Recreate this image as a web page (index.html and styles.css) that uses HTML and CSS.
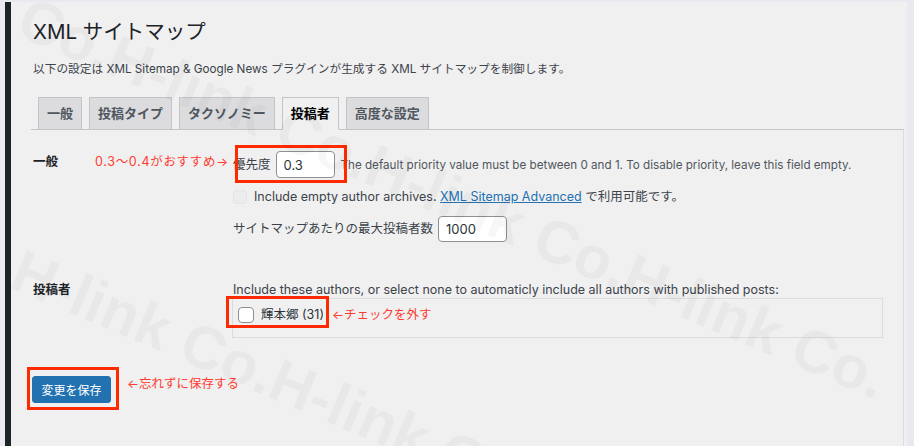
FILE: index.html
```html
<!DOCTYPE html>
<html lang="ja">
<head>
    <meta charset="UTF-8">
    <meta name="viewport" content="width=device-width, initial-scale=1.0">
    <title>XML サイトマップ</title>
    <link rel="stylesheet" href="styles.css">
</head>
<body>

    <div class="screen">
        <div class="wrap">
            <h1>XML サイトマップ</h1>
            <p class="intro">以下の設定は XML Sitemap &amp; Google News プラグインが生成する XML サイトマップを制御します。</p>

            <nav class="tabs">
                <a class="tab">一般</a>
                <a class="tab">投稿タイプ</a>
                <a class="tab">タクソノミー</a>
                <a class="tab tab-active">投稿者</a>
                <a class="tab">高度な設定</a>
            </nav>

            <form class="panel">
                <!-- 一般 -->
                <div class="row row-first">
                    <div class="row-label">
                        <span class="label-text">一般</span>
                        <span class="note note-priority">0.3〜0.4がおすすめ→</span>
                    </div>
                    <div class="row-field">
                        <div class="line">
                            <span class="marked">
                                <label for="priority">優先度</label>
                                <input type="text" id="priority" class="small-input" value="0.3">
                                <span class="redbox box-priority"></span>
                            </span>
                            <span class="description">The default priority value must be between 0 and 1. To disable priority, leave this field empty.</span>
                        </div>
                        <div class="line line-check">
                            <input type="checkbox" class="check check-disabled" disabled>
                            <span>Include empty author archives. <a class="link">XML Sitemap Advanced</a> で利用可能です。</span>
                        </div>
                        <div class="line line-max">
                            <label for="max-authors">サイトマップあたりの最大投稿者数</label>
                            <input type="text" id="max-authors" class="num-input" value="1000">
                        </div>
                    </div>
                </div>

                <!-- 投稿者 -->
                <div class="row">
                    <div class="row-label">
                        <span class="label-text">投稿者</span>
                    </div>
                    <div class="row-field">
                        <p class="authors-help">Include these authors, or select none to automaticly include all authors with published posts:</p>
                        <div class="author-box">
                            <span class="marked author">
                                <input type="checkbox" class="check">
                                <span>輝本郷 (31)</span>
                                <span class="redbox box-author"></span>
                            </span>
                            <span class="note">←チェックを外す</span>
                        </div>
                    </div>
                </div>

                <div class="submit">
                    <span class="marked">
                        <button type="button" class="button-primary">変更を保存</button>
                        <span class="redbox box-save"></span>
                    </span>
                    <span class="note note-save">←忘れずに保存する</span>
                </div>
            </form>
        </div>

        <span class="watermark wm-one">H-link Co.H-link Co.H-link Co.</span>
        <span class="watermark wm-two">H-link Co.H-link Co.H-link Co.H-link Co.</span>
    </div>

</body>
</html>
```

FILE: styles.css
```css
body {
    margin: 0;
    height: 100vh;
    box-sizing: border-box;
    padding: 2px 7px 0 5px;
    background-color: #e9e9ef;
    display: flex;
    overflow: hidden;
    font-family: Inter, "Noto Sans CJK JP", sans-serif;
    font-size: 12.5px;
    color: #3c434a;
}

.screen {
    flex: 1;
    position: relative;
    overflow: hidden;
    border-left: 6px solid #1d2327;
    background-color: #f0f0f1;
    padding: 0 3px 0 20px;
}

.wrap {
    height: 100%;
    display: flex;
    flex-direction: column;
}

h1 {
    margin: 16px 0 0;
    padding-left: 2px;
    font-size: 20.5px;
    font-weight: 400;
    line-height: 27px;
    color: #1d2327;
}

.intro {
    margin: 15px 0 0;
    padding-left: 2px;
    font-size: 11.7px;
    line-height: 18px;
    color: #3c434a;
}

/* tabs */
.tabs {
    display: flex;
    align-items: flex-end;
    gap: 7px;
    margin-top: 19px;
    padding-left: 7px;
    border-bottom: 1px solid #c3c4c7;
}

.tab {
    border: 1px solid #c3c4c7;
    border-bottom: none;
    background-color: #dcdcde;
    color: #50575e;
    font-size: 13px;
    font-weight: 700;
    line-height: 20px;
    padding: 5px 8px 6px;
}

.tab-active {
    background-color: #f0f0f1;
    border-bottom: 1px solid #f0f0f1;
    margin-bottom: -1px;
    color: #000;
}

/* form */
.panel {
    flex: 1;
    border-right: 1px solid #dcdcde;
}

.row {
    display: grid;
    grid-template-columns: 202px 1fr;
    padding: 20px 0;
}

.row-first {
    padding-top: 21px;
}

.row-label {
    display: flex;
    align-items: center;
    padding-left: 2px;
    line-height: 16px;
    align-self: start;
}

.row-first .row-label {
    padding-top: 3px;
}

.label-text {
    width: 62px;
    font-weight: 700;
    color: #1d2327;
}

.note {
    color: #ff3b30;
    white-space: nowrap;
}

.note-priority {
    letter-spacing: 0.7px;
}

.line {
    display: flex;
    align-items: center;
    line-height: 20px;
}

.line-check,
.line-max {
    margin-top: 9px;
}

.line-max label {
    margin-right: 5px;
}

.marked {
    position: relative;
    display: inline-flex;
    align-items: center;
}

.marked label {
    margin-right: 5px;
}

.small-input,
.num-input {
    box-sizing: border-box;
    height: 27px;
    padding: 0 7px;
    border: 1px solid #8c8f94;
    border-radius: 4px;
    background-color: white;
    font-family: Inter, sans-serif;
    font-size: 13px;
    color: #2c3338;
}

.small-input {
    width: 59px;
}

.num-input {
    width: 69px;
    height: 26px;
}

.description {
    margin-left: 6px;
    font-size: 11.65px;
    color: #50575e;
    white-space: nowrap;
}

.check {
    appearance: none;
    box-sizing: border-box;
    width: 16px;
    height: 16px;
    margin: 0;
    border: 1px solid #8c8f94;
    border-radius: 4px;
    background-color: white;
}

.check-disabled {
    width: 14px;
    height: 14px;
    margin-right: 7px;
    border-color: #e4e4e6;
    background-color: #ececed;
}

.link {
    color: #2271b1;
    text-decoration: underline;
}

.authors-help {
    margin: 0;
    line-height: 16px;
    white-space: nowrap;
}

.author-box {
    display: flex;
    align-items: center;
    margin: 0 20px 0 -1px;
    padding: 8px 5px 14px;
    border: 1px solid #dcdcde;
    line-height: 16px;
}

.author {
    gap: 7px;
    color: #2c3338;
}

.author + .note {
    margin-left: 8px;
}

.submit {
    display: flex;
    align-items: flex-start;
    margin-top: 18px;
    padding-left: 1px;
}

.button-primary {
    padding: 0 8.5px;
    border: 1px solid #2271b1;
    border-radius: 3px;
    background-color: #2271b1;
    color: white;
    font-family: "Noto Sans CJK JP", sans-serif;
    font-size: 12px;
    line-height: 25px;
}

.note-save {
    margin-left: 16px;
    line-height: 16px;
}

/* red annotation frames drawn over the screenshot */
.redbox {
    position: absolute;
    border: 3px solid #ff2a00;
    pointer-events: none;
}

.box-priority {
    left: 2px;
    top: -6px;
    right: -12px;
    bottom: -5px;
}

.box-author {
    left: -12px;
    top: -11px;
    right: -5px;
    bottom: -5px;
}

.box-save {
    left: -5px;
    top: -9px;
    right: -8px;
    bottom: -7px;
}

/* watermark */
.watermark {
    position: absolute;
    left: 0;
    top: 0;
    transform-origin: left center;
    font-family: "Liberation Sans", Arial, sans-serif;
    font-size: 60px;
    font-weight: 700;
    line-height: 60px;
    white-space: nowrap;
    color: rgba(0, 0, 0, 0.03);
    pointer-events: none;
}

.wm-one {
    left: 4px;
    top: 236px;
    transform: rotate(23deg);
}

.wm-two {
    left: -158px;
    top: -88px;
    transform: rotate(23deg);
}
```
